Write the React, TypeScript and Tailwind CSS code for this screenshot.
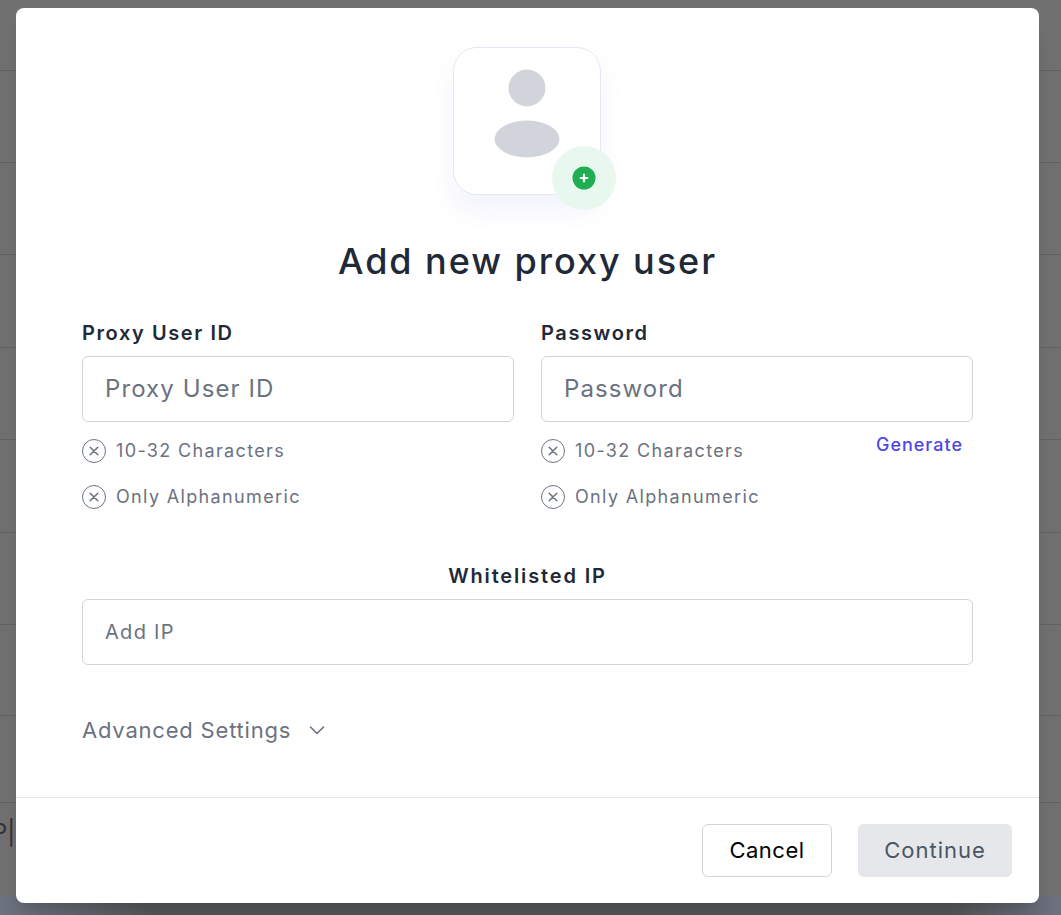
const font = "[font-family:'Inter','Liberation_Sans',sans-serif]";

function XIcon() {
  return (
    <svg width="24" height="24" viewBox="0 0 24 24" fill="none" className="shrink-0">
      <circle cx="12" cy="12" r="11.5" stroke="#6b7280" strokeWidth="1" />
      <path d="M8.2 8.2l7.6 7.6M15.8 8.2l-7.6 7.6" stroke="#6b7280" strokeWidth="1.5" strokeLinecap="round" />
    </svg>
  );
}

function Hint({ text }: { text: string }) {
  return (
    <div className="flex items-center gap-[10px] h-6">
      <XIcon />
      <span className="text-[18px] leading-6 text-[#6b7280] tracking-[1.35px]">{text}</span>
    </div>
  );
}

function Field({ label, placeholder, generate }: { label: string; placeholder: string; generate?: boolean }) {
  return (
    <div className="flex-1 min-w-0">
      <div className="text-[20px] leading-6 font-semibold text-[#1f2937] h-[24px] tracking-[1.6px]">{label}</div>
      <div className="mt-[11px] h-[66px] rounded-md border border-[#d1d5db] bg-white flex items-center pl-[22px] pr-[22px] text-[24px] text-[#6b7280] tracking-[1.1px]">
        {placeholder}
      </div>
      <div className="relative mt-[17px] flex flex-col gap-[22px]">
        <Hint text="10-32 Characters" />
        <Hint text="Only Alphanumeric" />
        {generate && (
          <span className="absolute right-[10px] top-[-6px] text-[18px] leading-6 font-medium text-[#4f46e5] tracking-[1px]">Generate</span>
        )}
      </div>
    </div>
  );
}

export default function App() {
  return (
    <div className={`relative h-[915px] w-full overflow-hidden bg-[#707070] ${font}`}>
      <div className="flex flex-col">
        <div className="h-[71px] border-b border-[#626262]" />
        <div className="h-[92px] border-b border-[#626262]" />
        <div className="h-[92px] border-b border-[#626262]" />
        <div className="h-[93px] border-b border-[#626262]" />
        <div className="h-[92px] border-b border-[#626262]" />
        <div className="h-[93px] border-b border-[#626262]" />
        <div className="h-[92px] border-b border-[#626262]" />
        <div className="h-[91px] border-b border-[#626262]" />
        <div className="h-[87px] border-b border-[#626262]" />
        <div className="h-[94px] pt-[14px] text-[24px] leading-8 text-[#333333] overflow-hidden">
          <span className="block -ml-[8px]">P|</span>
        </div>
      </div>
      <div className="absolute left-0 right-0 top-[896px] h-[19px] bg-[linear-gradient(90deg,#6d7280_0%,#55585a_14%,#55585a_90%,#6d7280_100%)]" />
      <div className="absolute left-[16px] top-[8px] w-[1023px] h-[895px] rounded-lg bg-white shadow-xl flex flex-col">
        <div className="flex-1 px-[66px] pt-[39px]">
          <div className="flex justify-center pr-[2px]">
            <div className="relative w-[148px] h-[148px] rounded-[24px] border border-[#e5e7f5] bg-white shadow-[0_16px_24px_rgba(99,102,241,0.08)]">
              <svg width="148" height="148" viewBox="0 0 148 148" className="absolute -left-px -top-px">
                <circle cx="74" cy="41" r="18.5" fill="#d1d5db" />
                <ellipse cx="74" cy="92" rx="32.5" ry="18.5" fill="#d1d5db" />
              </svg>
              <div className="absolute left-[98px] top-[98px] w-16 h-16 rounded-full bg-[#e8f8ee] flex items-center justify-center">
                <svg width="24" height="24" viewBox="0 0 24 24">
                  <circle cx="12" cy="12" r="11.5" fill="#1fae52" />
                  <path d="M12 8.7v6.6M8.7 12h6.6" stroke="white" strokeWidth="2.2" strokeLinecap="round" />
                </svg>
              </div>
            </div>
          </div>
          <h1 className="mt-[41px] text-center text-[36px] leading-[50px] font-medium text-[#1f2937] tracking-[1.95px]">Add new proxy user</h1>
          <div className="mt-[35px] flex gap-[27px]">
            <Field label="Proxy User ID" placeholder="Proxy User ID" />
            <Field label="Password" placeholder="Password" generate />
          </div>
          <div className="mt-[55px] text-center text-[20px] leading-6 font-semibold text-[#1f2937] tracking-[1.85px]">Whitelisted IP</div>
          <div className="mt-[11px] h-[66px] rounded-md border border-[#d1d5db] flex items-center px-[22px] text-[20px] text-[#6b7280] tracking-[1.3px]">Add IP</div>
          <div className="mt-[49px] flex items-center gap-[16px] text-[22px] leading-8 text-[#6b7280] tracking-[0.8px]">
            <span>Advanced Settings</span>
            <svg width="20" height="20" viewBox="0 0 20 20" fill="none">
              <path d="M3.5 7l6.5 6.5L16.5 7" stroke="#6b7280" strokeWidth="1.6" strokeLinecap="round" strokeLinejoin="round" />
            </svg>
          </div>
        </div>
        <div className="h-[106px] border-t border-[#e5e7eb] flex items-start justify-end gap-[26px] pt-[26px] pr-[27px]">
          <button className="w-[130px] h-[53px] rounded-md border border-[#d1d5db] bg-white text-[22px] font-normal text-black tracking-[0.5px]">Cancel</button>
          <button className="w-[154px] h-[53px] rounded-md bg-[#e5e7eb] text-[22px] font-normal text-[#4b5563] tracking-[1px]">Continue</button>
        </div>
      </div>
    </div>
  );
}
